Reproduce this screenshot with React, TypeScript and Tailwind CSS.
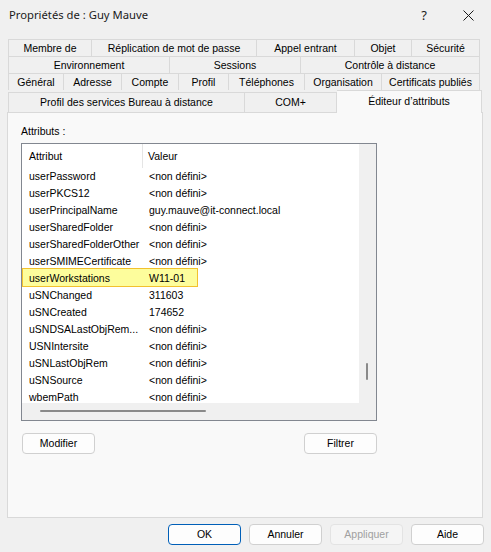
import React from "react";

const rows: [string, string][] = [
  ["userPassword", "<non défini>"],
  ["userPKCS12", "<non défini>"],
  ["userPrincipalName", "guy.mauve@it-connect.local"],
  ["userSharedFolder", "<non défini>"],
  ["userSharedFolderOther", "<non défini>"],
  ["userSMIMECertificate", "<non défini>"],
  ["userWorkstations", "W11-01"],
  ["uSNChanged", "311603"],
  ["uSNCreated", "174652"],
  ["uSNDSALastObjRem...", "<non défini>"],
  ["USNIntersite", "<non défini>"],
  ["uSNLastObjRem", "<non défini>"],
  ["uSNSource", "<non défini>"],
  ["wbemPath", "<non défini>"],
];

function Tab({ label, w, first }: { label: string; w: string; first?: boolean }) {
  return (
    <div
      className={`${w} h-[17px] flex items-center justify-center border-t border-r border-[#d9d9d9] bg-[#f0f0f0] ${
        first ? "border-l" : ""
      }`}
    >
      {label}
    </div>
  );
}

function Btn({ label, cls = "" }: { label: string; cls?: string }) {
  return (
    <div
      className={`w-[73px] h-[21px] flex items-center justify-center rounded-[4px] border ${cls}`}
    >
      {label}
    </div>
  );
}

export default function App() {
  return (
    <div className="w-[491px] h-[552px] bg-[#f0f0f0] text-black overflow-hidden font-['Liberation_Sans',Arial,sans-serif] text-[10.5px] leading-none">
      {/* Title bar */}
      <div className="h-[30px] flex items-center pl-[9px] pr-[17px] font-['Segoe_UI','Noto_Sans',sans-serif] text-[11.25px] text-[#1a1a1a]">
        <span className="flex-1">Propriétés de : Guy Mauve</span>
        <span className="text-[13px] mr-[36px]">?</span>
        <svg width="11" height="11" viewBox="0 0 11 11">
          <path d="M0.5 0.5 L10.5 10.5 M10.5 0.5 L0.5 10.5" stroke="#1a1a1a" strokeWidth="1" />
        </svg>
      </div>

      {/* Tabs */}
      <div className="mt-[9px] pl-[8px]">
        <div className="flex">
          <Tab first label="Membre de" w="w-[84px]" />
          <Tab label="Réplication de mot de passe" w="w-[165px]" />
          <Tab label="Appel entrant" w="w-[98px]" />
          <Tab label="Objet" w="w-[57px]" />
          <Tab label="Sécurité" w="w-[68px]" />
        </div>
        <div className="flex">
          <Tab first label="Environnement" w="w-[162px]" />
          <Tab label="Sessions" w="w-[131px]" />
          <Tab label="Contrôle à distance" w="w-[179px]" />
        </div>
        <div className="flex">
          <Tab first label="Général" w="w-[56px]" />
          <Tab label="Adresse" w="w-[58px]" />
          <Tab label="Compte" w="w-[57px]" />
          <Tab label="Profil" w="w-[50px]" />
          <Tab label="Téléphones" w="w-[76px]" />
          <Tab label="Organisation" w="w-[77px]" />
          <Tab label="Certificats publiés" w="w-[98px]" />
        </div>
        <div className="flex items-end">
          <div className="w-[237px] h-[20px] flex items-center justify-center border-t border-l border-r border-[#d9d9d9] bg-[#f0f0f0]">
            Profil des services Bureau à distance
          </div>
          <div className="w-[92px] h-[20px] flex items-center justify-center border-t border-r border-[#d9d9d9] bg-[#f0f0f0]">
            COM+
          </div>
          <div className="relative z-10 w-[145px] h-[23px] -mb-px flex items-start pt-[5px] justify-center border-t border-r border-[#d9d9d9] bg-[#f9f9f9]">
            Éditeur d’attributs
          </div>
        </div>
      </div>

      {/* Panel */}
      <div className="ml-[7px] w-[476px] h-[406px] border border-[#d9d9d9] bg-[#f9f9f9] pl-[13px] pt-[13px]">
        <div className="h-[12px]">Attributs :</div>
        <div className="mt-[5px] w-[356px] h-[278px] border border-[#828790] bg-white grid grid-cols-[1fr_17px] grid-rows-[1fr_17px]">
          {/* content */}
          <div className="overflow-hidden relative">
            <div className="h-[24px] flex items-center">
              <div className="w-[121px] h-full flex items-center pl-[7px] border-r border-[#e5e5e5]">Attribut</div>
              <div className="pl-[5px]">Valeur</div>
            </div>
            {rows.map(([a, v]) => (
              <div key={a} className="relative h-[17px] flex items-center">
                {a === "userWorkstations" && (
                  <div className="absolute left-0 top-[-2px] w-[176px] h-[19px] bg-[#fdfd9c] border-[1.5px] border-[#f2c12e]" />
                )}
                <div className="relative w-[121px] pl-[7px] whitespace-nowrap">{a}</div>
                <div className="relative pl-[6px] whitespace-nowrap">{v}</div>
              </div>
            ))}
          </div>
          {/* vertical scrollbar */}
          <div className="bg-[#f0f0f0] relative">
            <div className="absolute left-[7px] top-[219px] w-[2px] h-[17px] rounded-full bg-[#8a8a8a]" />
          </div>
          {/* horizontal scrollbar */}
          <div className="bg-[#f0f0f0] relative">
            <div className="absolute left-[18px] top-[7px] w-[166px] h-[2px] rounded-full bg-[#8a8a8a]" />
          </div>
          <div className="bg-[#f0f0f0]" />
        </div>
        <div className="mt-[12px] w-[356px] flex justify-between pl-px">
          <Btn label="Modifier" cls="border-[#d0d0d0] bg-[#fdfdfd]" />
          <Btn label="Filtrer" cls="border-[#d0d0d0] bg-[#fdfdfd]" />
        </div>
      </div>

      {/* Bottom buttons */}
      <div className="mt-[6px] flex justify-end gap-[8px] pr-[7px]">
        <Btn label="OK" cls="border-[#005fb8] bg-[#fdfdfd]" />
        <Btn label="Annuler" cls="border-[#d0d0d0] bg-[#fdfdfd]" />
        <Btn label="Appliquer" cls="border-[#e3e3e3] bg-[#f5f5f5] text-[#a0a0a0]" />
        <Btn label="Aide" cls="border-[#d0d0d0] bg-[#fdfdfd]" />
      </div>
    </div>
  );
}
